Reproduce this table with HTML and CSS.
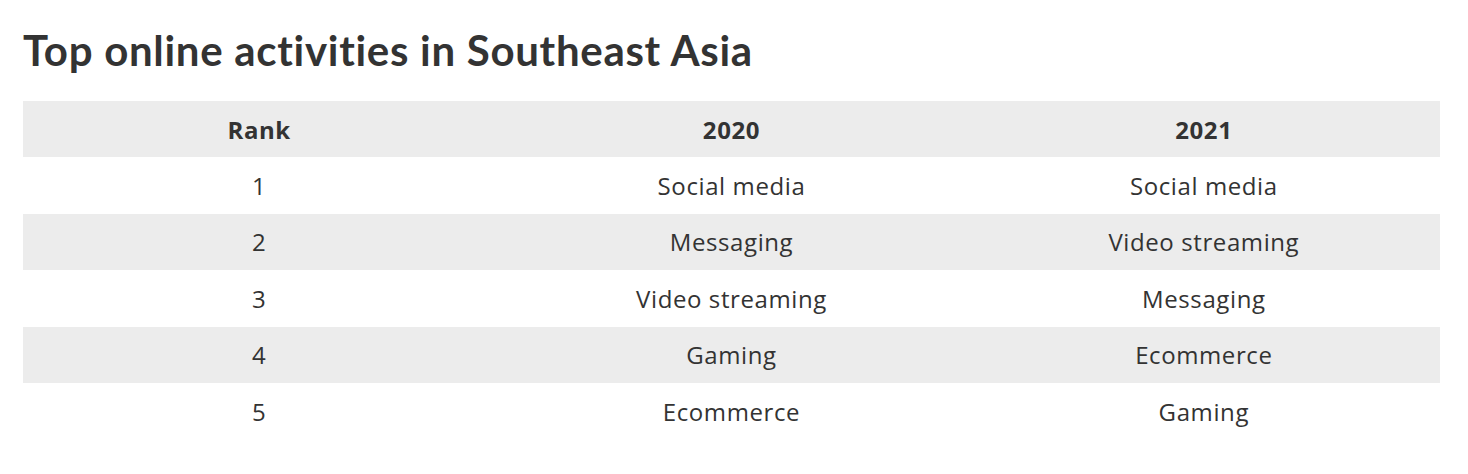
FILE: index.html
```html
<!DOCTYPE html>
<html lang="en">
<head>
<meta charset="utf-8">
<title>Top online activities in Southeast Asia</title>
<link rel="stylesheet" href="styles.css">
</head>
<body>
<main class="page">
  <h1 class="title">Top online activities in Southeast Asia</h1>
  <table class="ranking">
    <thead>
      <tr><th>Rank</th><th>2020</th><th>2021</th></tr>
    </thead>
    <tbody>
      <tr><td>1</td><td>Social media</td><td>Social media</td></tr>
      <tr><td>2</td><td>Messaging</td><td>Video streaming</td></tr>
      <tr><td>3</td><td>Video streaming</td><td>Messaging</td></tr>
      <tr><td>4</td><td>Gaming</td><td>Ecommerce</td></tr>
      <tr><td>5</td><td>Ecommerce</td><td>Gaming</td></tr>
    </tbody>
  </table>
</main>
</body>
</html>
```
FILE: styles.css
```css
html, body {
  margin: 0;
  padding: 0;
  background: #ffffff;
}
body {
  font-family: "Open Sans", Lato, sans-serif;
  color: #333333;
}
.page {
  padding: 24px 28px 0 23px;
}
.title {
  margin: 0 0 25px 0;
  font-family: Lato, "Open Sans", sans-serif;
  font-size: 42px;
  letter-spacing: 0.7px;
  line-height: 52px;
  font-weight: 700;
  color: #333333;
}
.ranking {
  width: 1417px;
  border-collapse: collapse;
  table-layout: fixed;
}
.ranking th,
.ranking td {
  height: 56.4px;
  padding: 0;
  text-align: center;
  vertical-align: middle;
  font-size: 24px;
  letter-spacing: 0.6px;
}
.ranking th {
  font-weight: 700;
  background: #ececec;
}
.ranking td {
  font-weight: 400;
}
.ranking tbody tr:nth-child(even) td {
  background: #ececec;
}
```
